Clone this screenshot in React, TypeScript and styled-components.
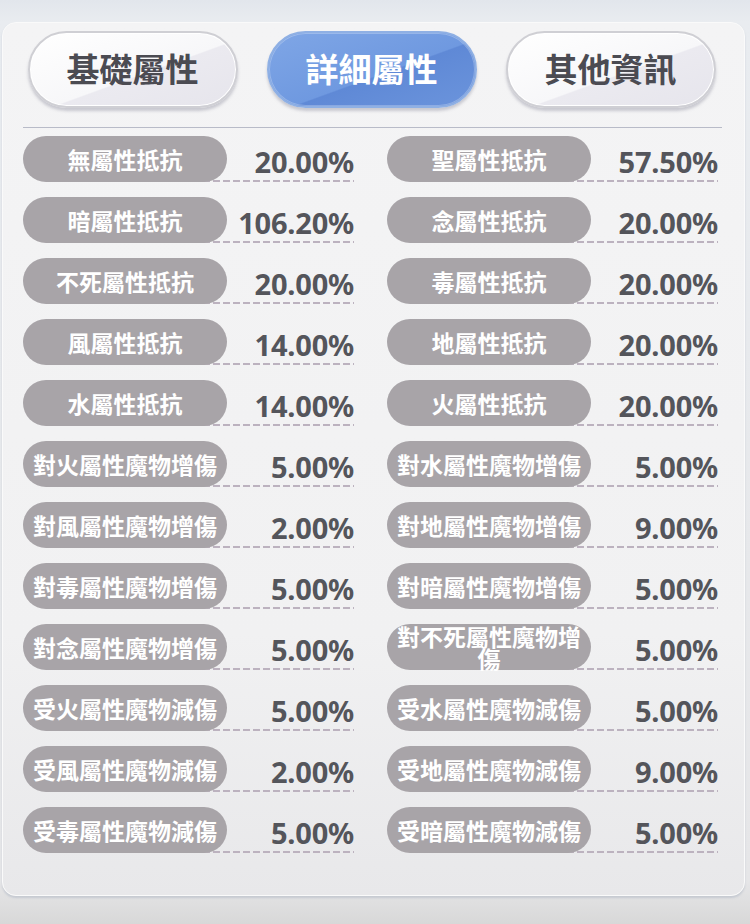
import styled, { createGlobalStyle } from "styled-components";

interface Stat {
  label: string;
  value: string;
}

const stats: Stat[] = [
  { label: "無屬性抵抗", value: "20.00%" },
  { label: "聖屬性抵抗", value: "57.50%" },
  { label: "暗屬性抵抗", value: "106.20%" },
  { label: "念屬性抵抗", value: "20.00%" },
  { label: "不死屬性抵抗", value: "20.00%" },
  { label: "毒屬性抵抗", value: "20.00%" },
  { label: "風屬性抵抗", value: "14.00%" },
  { label: "地屬性抵抗", value: "20.00%" },
  { label: "水屬性抵抗", value: "14.00%" },
  { label: "火屬性抵抗", value: "20.00%" },
  { label: "對火屬性魔物增傷", value: "5.00%" },
  { label: "對水屬性魔物增傷", value: "5.00%" },
  { label: "對風屬性魔物增傷", value: "2.00%" },
  { label: "對地屬性魔物增傷", value: "9.00%" },
  { label: "對毒屬性魔物增傷", value: "5.00%" },
  { label: "對暗屬性魔物增傷", value: "5.00%" },
  { label: "對念屬性魔物增傷", value: "5.00%" },
  { label: "對不死屬性魔物增傷", value: "5.00%" },
  { label: "受火屬性魔物減傷", value: "5.00%" },
  { label: "受水屬性魔物減傷", value: "5.00%" },
  { label: "受風屬性魔物減傷", value: "2.00%" },
  { label: "受地屬性魔物減傷", value: "9.00%" },
  { label: "受毒屬性魔物減傷", value: "5.00%" },
  { label: "受暗屬性魔物減傷", value: "5.00%" },
];

const tabs = ["基礎屬性", "詳細屬性", "其他資訊"];

const GlobalStyle = createGlobalStyle`
  html, body {
    margin: 0;
    padding: 0;
  }
  body {
    font-family: "Noto Sans CJK TC", "Noto Sans", sans-serif;
  }
`;

const Page = styled.div`
  width: 750px;
  height: 924px;
  overflow: hidden;
  background: linear-gradient(
    180deg,
    #e2e6ec 0px,
    #e9ecf0 22px,
    #e6e6e8 880px,
    #d8d8d8 924px
  );
  padding-top: 22px;
  box-sizing: border-box;
`;

const Panel = styled.div`
  margin-left: 2px;
  width: 743px;
  height: 874px;
  box-sizing: border-box;
  border-radius: 14px;
  background: linear-gradient(180deg, #f4f4f5 0%, #f1f1f2 70%, #e8e8ea 100%);
  border: 1px solid #fafafa;
  box-shadow: 0 2px 2px rgba(150, 160, 180, 0.35);
  padding-top: 8px;
`;

const TabBar = styled.div`
  display: flex;
  justify-content: center;
  gap: 29px;
  padding-right: 4px;
`;

const Tab = styled.div<{ $active?: boolean }>`
  width: 210px;
  height: 77px;
  box-sizing: border-box;
  border-radius: 39px;
  display: flex;
  align-items: center;
  justify-content: center;
  font-size: 33px;
  font-weight: 700;
  padding-bottom: 4px;
  color: ${(p) => (p.$active ? "#ffffff" : "#4b4b52")};
  border: 2px solid ${(p) => (p.$active ? "#8fb0e4" : "#cfcfd4")};
  background: ${(p) =>
    p.$active
      ? "linear-gradient(160deg, #7fa6e6 0%, #6f99e0 55%, #5f89d6 56%, #6b94dc 100%)"
      : "linear-gradient(160deg, #ffffff 0%, #f7f7f9 55%, #ebeaf0 56%, #e6e5ec 100%)"};
  box-shadow: 0 3px 3px rgba(120, 120, 140, 0.35),
    inset 0 0 0 1px ${(p) => (p.$active ? "rgba(255,255,255,0.25)" : "#ffffff")};
`;

const Divider = styled.div`
  height: 1px;
  background: #b8bbc8;
  margin: 19px 22px 0 20px;
`;

const Grid = styled.div`
  display: grid;
  grid-template-columns: 331px 331px;
  column-gap: 33px;
  row-gap: 15px;
  padding: 8px 0 0 20px;
`;

const Row = styled.div`
  position: relative;
  height: 46px;
  display: flex;
  align-items: center;
  justify-content: space-between;

  &::after {
    content: "";
    position: absolute;
    left: 180px;
    right: 0;
    bottom: 0;
    height: 2px;
    background: repeating-linear-gradient(
      90deg,
      #bcb2bf 0px,
      #bcb2bf 7px,
      transparent 7px,
      transparent 10px
    );
  }
`;

const Label = styled.div`
  position: relative;
  z-index: 1;
  width: 204px;
  height: 46px;
  box-sizing: border-box;
  padding: 0 6px;
  border-radius: 23px;
  background: #a8a4a8;
  color: #ffffff;
  font-size: 23px;
  font-weight: 700;
  line-height: 22px;
  display: flex;
  align-items: center;
  justify-content: center;
  text-align: center;
`;

const Value = styled.div`
  font-family: "Noto Sans", "Open Sans", sans-serif;
  font-size: 29px;
  font-weight: 700;
  color: #54555b;
  padding-top: 4px;
  letter-spacing: -0.2px;
`;

function App() {
  return (
    <Page>
      <GlobalStyle />
      <Panel>
        <TabBar>
          {tabs.map((t, i) => (
            <Tab key={t} $active={i === 1}>
              {t}
            </Tab>
          ))}
        </TabBar>
        <Divider />
        <Grid>
          {stats.map((s) => (
            <Row key={s.label}>
              <Label>{s.label}</Label>
              <Value>{s.value}</Value>
            </Row>
          ))}
        </Grid>
      </Panel>
    </Page>
  );
}

export default App;
